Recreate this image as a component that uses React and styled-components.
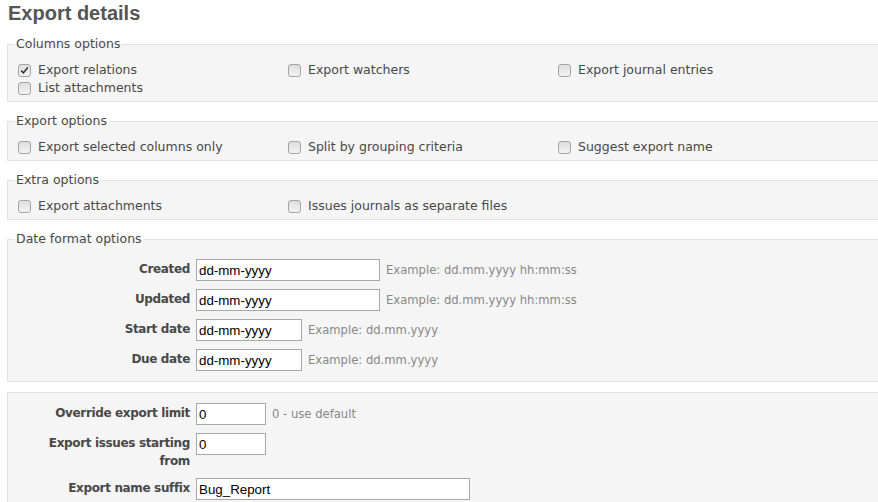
import React from "react";
import styled, { createGlobalStyle } from "styled-components";

const GlobalStyle = createGlobalStyle`
  html, body { margin: 0; padding: 0; background: #fff; overflow: hidden; }
  body {
    font-family: "DejaVu Sans", Verdana, sans-serif;
    font-size: 12.5px;
    color: #484848;
  }
`;

const Page = styled.div`
  padding: 0 0 0 7px;
  width: 920px;
`;

const Title = styled.h2`
  margin: 0;
  padding: 1px 0 10px 1px;
  font-family: "Liberation Sans", Arial, sans-serif;
  font-size: 20px;
  line-height: 24px;
  font-weight: bold;
  color: #555;
`;

const Box = styled.fieldset`
  margin: 0 0 10px 0;
  padding: ${(p) => p.$pad || "0 6px 4px"};
  border: 1px solid #e2e2e2;
  background: #f5f5f5;
  min-width: 0;
`;

const Legend = styled.legend`
  padding: 0 2px;
  font-size: 12.5px;
  line-height: 18px;
  color: #484848;
`;

const CheckGrid = styled.div`
  display: grid;
  grid-template-columns: repeat(3, 270px);
  padding: 8px 0 0 4px;
`;

const CheckItem = styled.label`
  display: flex;
  align-items: center;
  gap: 7px;
  line-height: 18px;
  height: 18px;
  white-space: nowrap;
`;

const Tick = styled.span`
  width: 11px;
  height: 11px;
  border: 1px solid #a4a4a4;
  border-radius: 3px;
  background: linear-gradient(#dedede, #f2f2f2);
  display: inline-flex;
  align-items: center;
  justify-content: center;
  flex: none;
`;

const Rows = styled.div`
  padding-top: ${(p) => p.$top || 0}px;
`;

const Row = styled.div`
  display: flex;
  align-items: flex-start;
  padding: 4px 0;
`;

const Label = styled.span`
  box-sizing: border-box;
  width: 176px;
  padding: 1px 0 0 6px;
  flex: none;
  text-align: right;
  font-weight: bold;
  font-size: 12px;
  letter-spacing: -0.35px;
  line-height: 18px;
  margin-right: 6px;
  color: #484848;
`;

const Input = styled.input`
  box-sizing: border-box;
  width: ${(p) => p.$w}px;
  height: 22px;
  margin: 0;
  padding: 1px 2px;
  border: 1px solid #a8a8a8;
  background: #fff;
  font-family: "Liberation Sans", Arial, sans-serif;
  font-size: 13.33px;
  color: #000;
  outline: none;
`;

const Hint = styled.span`
  align-self: center;
  margin-left: 6px;
  color: #888;
  font-size: 11.6px;
  line-height: 18px;
`;

function Check({ checked, children }) {
  return (
    <CheckItem>
      <Tick>
        {checked && (
          <svg width="9" height="9" viewBox="0 0 9 9">
            <path d="M1.2 4.6 L3.4 6.9 L7.8 1.6" fill="none" stroke="#333" strokeWidth="1.6" />
          </svg>
        )}
      </Tick>
      {children}
    </CheckItem>
  );
}

function Field({ label, value, w, hint }) {
  return (
    <Row>
      <Label>{label}</Label>
      <Input $w={w} defaultValue={value} />
      {hint && <Hint>{hint}</Hint>}
    </Row>
  );
}

export default function App() {
  return (
    <>
      <GlobalStyle />
      <Page>
        <Title>Export details</Title>
        <Box>
          <Legend>Columns options</Legend>
          <CheckGrid>
            <Check checked>Export relations</Check>
            <Check>Export watchers</Check>
            <Check>Export journal entries</Check>
            <Check>List attachments</Check>
          </CheckGrid>
        </Box>
        <Box>
          <Legend>Export options</Legend>
          <CheckGrid>
            <Check>Export selected columns only</Check>
            <Check>Split by grouping criteria</Check>
            <Check>Suggest export name</Check>
          </CheckGrid>
        </Box>
        <Box>
          <Legend>Extra options</Legend>
          <CheckGrid>
            <Check>Export attachments</Check>
            <Check>Issues journals as separate files</Check>
          </CheckGrid>
        </Box>
        <Box $pad="0 6px 6px">
          <Legend>Date format options</Legend>
          <Rows $top={7}>
            <Field label="Created" value="dd-mm-yyyy" w={184} hint="Example: dd.mm.yyyy hh:mm:ss" />
            <Field label="Updated" value="dd-mm-yyyy" w={184} hint="Example: dd.mm.yyyy hh:mm:ss" />
            <Field label="Start date" value="dd-mm-yyyy" w={106} hint="Example: dd.mm.yyyy" />
            <Field label="Due date" value="dd-mm-yyyy" w={106} hint="Example: dd.mm.yyyy" />
          </Rows>
        </Box>
        <Box $pad="6px 6px 5px">
          <Rows>
            <Field label="Override export limit" value="0" w={70} hint="0 - use default" />
            <Field label="Export issues starting from" value="0" w={70} />
            <Field label="Export name suffix" value="Bug_Report" w={274} />
          </Rows>
        </Box>
      </Page>
    </>
  );
}
